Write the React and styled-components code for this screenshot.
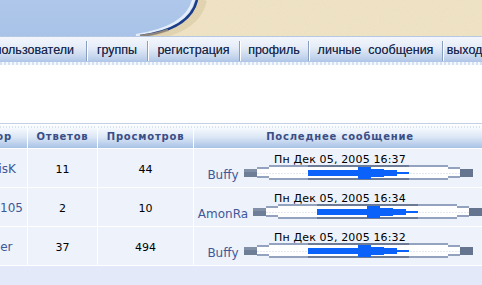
import React from 'react';
import styled, { createGlobalStyle } from 'styled-components';

const Global = createGlobalStyle`
  html, body { margin: 0; padding: 0; background: #ffffff; overflow: hidden; }
  body { width: 482px; height: 285px; }
`;

const Page = styled.div`
  width: 482px;
  height: 285px;
  overflow: hidden;
  display: flex;
  flex-direction: column;
  background: #ffffff;
`;

const Banner = styled.div`
  height: 36px;
  flex: none;
  line-height: 0;
`;

const Nav = styled.nav`
  flex: none;
  box-sizing: border-box;
  height: 26px;
  margin-left: -11px;
  display: flex;
  border-top: 1px dashed #b9c9e0;
  background: linear-gradient(to bottom, #f3f6fc 0%, #e6edf8 40%, #c9d8ee 75%, #afc5e6 100%);
`;

const NavItem = styled.a`
  width: ${p => p.$w}px;
  flex: none;
  box-sizing: border-box;
  display: flex;
  align-items: center;
  justify-content: ${p => (p.$pr ? 'flex-end' : 'center')};
  padding-right: ${p => p.$pr || 0}px;
  white-space: pre;
  font: 12.5px "Liberation Sans", Arial, sans-serif;
  color: #17264a;
  text-decoration: none;
  text-shadow: 0 0 0.4px rgba(23, 38, 74, 0.6);
`;

const NavSep = styled.span`
  flex: none;
  align-self: center;
  width: 1px;
  height: 20px;
  margin-top: 2px;
  background: #8a9ec0;
  box-shadow: 1px 0 0 #ffffff;
`;

const NavStripe = styled.div`
  flex: none;
  height: 3px;
  background: repeating-linear-gradient(90deg, #d6e1f1 0 2px, #f5f8fd 2px 4px);
`;

const Table = styled.div`
  flex: none;
  margin-top: 58px;
  margin-left: -45px;
  display: grid;
  grid-template-columns: 72px 69px 95px 292px;
  gap: 1px;
  background: #ffffff;
  border-top: 1px solid #c3cfe2;
`;

const HeadCell = styled.div`
  height: 24px;
  box-sizing: border-box;
  display: flex;
  align-items: center;
  justify-content: center;
  padding-left: ${p => p.$pl || 0}px;
  background:
    repeating-linear-gradient(90deg, rgba(190, 208, 232, 0.55) 0 1px, transparent 1px 3px) 0 2px / 100% 2px no-repeat,
    linear-gradient(to bottom, #ffffff 0%, #f3f7fd 22%, #dbe6f5 55%, #a8c2e7 100%);
  font: bold 10px "DejaVu Sans", Verdana, sans-serif;
  letter-spacing: 0.8px;
  color: #3a4e86;
  white-space: nowrap;
`;

const Cell = styled.div`
  height: 38px;
  box-sizing: border-box;
  background: #eef2fb;
  display: flex;
  align-items: center;
  justify-content: center;
  padding-top: ${p => p.$pt || 0}px;
  padding-left: ${p => p.$pl || 0}px;
  white-space: nowrap;
`;

const Author = styled.a`
  font: 12px "DejaVu Sans", Verdana, sans-serif;
  color: #3f5898;
  text-decoration: none;
`;

const Num = styled.span`
  font: 11px "DejaVu Sans", Verdana, sans-serif;
  color: #000000;
`;

const LastCell = styled.div`
  height: 38px;
  box-sizing: border-box;
  background: #eef2fb;
  display: flex;
  flex-direction: column;
  align-items: center;
  padding-top: 6px;
  white-space: nowrap;
`;

const PostDate = styled.div`
  font: 11px/10px "DejaVu Sans", Verdana, sans-serif;
  letter-spacing: 0.15px;
  color: #000000;
  height: 10px;
`;

const PostLine = styled.div`
  display: flex;
  align-items: flex-end;
  gap: 5px;
`;

const PostUser = styled.a`
  font: 12px/10px "DejaVu Sans", Verdana, sans-serif;
  color: #3f5898;
  text-decoration: none;
`;

const Foot = styled.div`
  grid-column: 1 / -1;
  height: 22px;
  background: #e3e9f8;
`;

function BannerArt() {
  const curve = 'M197 0 C193 17 178 31 140 36';
  return (
    <svg width="482" height="36" viewBox="0 0 482 36">
      <defs>
        <filter id="grain" x="0" y="0" width="100%" height="100%">
          <feTurbulence type="fractalNoise" baseFrequency="0.7" numOctaves="2" seed="4" />
          <feColorMatrix values="0 0 0 0 0.78  0 0 0 0 0.68  0 0 0 0 0.48  0 0 0 0.55 0" />
          <feComposite in2="SourceGraphic" operator="in" />
        </filter>
        <linearGradient id="sky" x1="0" y1="0" x2="0" y2="1">
          <stop offset="0" stopColor="#aec7ea" />
          <stop offset="1" stopColor="#a9c3e8" />
        </linearGradient>
      </defs>
      <rect width="482" height="36" fill="url(#sky)" />
      <path d={`${curve} L482 36 L482 0 Z`} fill="#f0e4c6" />
      <path d={`${curve} L482 36 L482 0 Z`} fill="#f0e4c6" filter="url(#grain)" opacity="0.6" />
      <path d="M203 0 C199 18 185 31 152 36" stroke="#c8b68c" strokeWidth="8" fill="none" opacity="0.35" />
      <path d="M193.5 0 C189.5 16 175 29.5 136 35.5" stroke="#e4eefb" strokeWidth="3" fill="none" />
      <path d={curve} stroke="#1b3c89" strokeWidth="2.6" fill="none" />
      <path d="M168 30 C160 33 152 35 140 36" stroke="#b9a377" strokeWidth="2.6" fill="none" opacity="0.7" />
    </svg>
  );
}

function PostBar() {
  const frameLight = '#93a3bf';
  const frameDark = '#6b7a95';
  return (
    <svg width="229" height="15" viewBox="0 0 229 15" style={{ flex: 'none', display: 'block' }}>
      <rect x="0" y="4" width="13" height="8" fill="#6f7e97" />
      <rect x="0" y="4" width="13" height="3" fill="#8190a7" />
      <rect x="216" y="4" width="13" height="8" fill="#66758f" />
      <rect x="13" y="2" width="12" height="11" fill="#ffffff" />
      <rect x="13" y="2" width="12" height="2" fill={frameLight} />
      <rect x="13" y="11" width="12" height="2" fill={frameLight} />
      <rect x="204" y="2" width="12" height="11" fill="#ffffff" />
      <rect x="204" y="2" width="12" height="2" fill={frameLight} />
      <rect x="204" y="11" width="12" height="2" fill={frameLight} />
      <rect x="25" y="0" width="179" height="15" fill="#ffffff" />
      <rect x="25" y="0" width="39" height="2" fill={frameLight} />
      <rect x="64" y="0" width="101" height="2" fill={frameDark} />
      <rect x="165" y="0" width="39" height="2" fill={frameLight} />
      <rect x="25" y="13" width="39" height="2" fill={frameLight} />
      <rect x="64" y="13" width="101" height="2" fill={frameDark} />
      <rect x="165" y="13" width="39" height="2" fill={frameLight} />
      <line x1="13" y1="8.5" x2="216" y2="8.5" stroke="#e3e8f1" strokeWidth="1" strokeDasharray="2 1" />
      <rect x="64" y="5" width="50" height="6" fill="#0a62fa" />
      <rect x="114" y="2" width="13" height="12" fill="#0a62fa" />
      <rect x="127" y="4" width="13" height="8" fill="#0a62fa" />
      <rect x="140" y="5" width="13" height="6" fill="#0a62fa" />
      <rect x="153" y="7" width="12" height="2" fill="#0a62fa" />
    </svg>
  );
}

const navItems = [
  { label: 'пользователи', w: 97, pr: 12 },
  { label: 'группы', w: 60 },
  { label: 'регистрация', w: 91 },
  { label: 'профиль', w: 68 },
  { label: 'личные  сообщения', w: 133 },
  { label: 'выход', w: 43 },
];

const topics = [
  { author: 'BasilisK', pl: 4, replies: '11', views: '44', date: 'Пн Дек 05, 2005 16:37', user: 'Buffy' },
  { author: 'Dmitry105', pl: 0, replies: '2', views: '10', date: 'Пн Дек 05, 2005 16:34', user: 'AmonRa' },
  { author: 'Ranger', pl: 0, replies: '37', views: '494', date: 'Пн Дек 05, 2005 16:32', user: 'Buffy' },
];

export default function App() {
  return (
    <Page>
      <Global />
      <Banner>
        <BannerArt />
      </Banner>
      <Nav>
        {navItems.map((it, i) => (
          <React.Fragment key={it.label}>
            {i > 0 && <NavSep />}
            <NavItem href="#" $w={it.w} $pr={it.pr}>{it.label}</NavItem>
          </React.Fragment>
        ))}
        <NavSep />
      </Nav>
      <NavStripe />
      <Table>
        <HeadCell $pl={4}>Автор</HeadCell>
        <HeadCell>Ответов</HeadCell>
        <HeadCell>Просмотров</HeadCell>
        <HeadCell>Последнее сообщение</HeadCell>
        {topics.map(t => (
          <React.Fragment key={t.date}>
            <Cell $pt={1} $pl={t.pl}><Author href="#">{t.author}</Author></Cell>
            <Cell $pt={2}><Num>{t.replies}</Num></Cell>
            <Cell $pt={2}><Num>{t.views}</Num></Cell>
            <LastCell>
              <PostDate>{t.date}</PostDate>
              <PostLine>
                <PostUser href="#">{t.user}</PostUser>
                <PostBar />
              </PostLine>
            </LastCell>
          </React.Fragment>
        ))}
        <Foot />
      </Table>
    </Page>
  );
}
